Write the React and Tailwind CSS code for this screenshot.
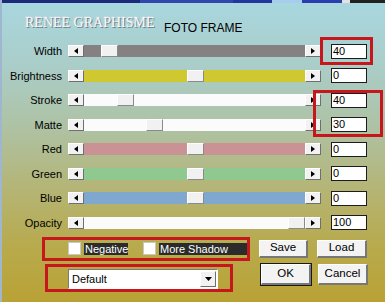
import React from "react";

const ui = { fontFamily: '"Liberation Sans", Arial, sans-serif' };

function ArrowBtn({ dir }) {
  return (
    <div className="w-[16px] h-[12px] shrink-0 bg-[#f2f2f2] border-t border-l border-t-white border-l-white border-b border-r border-b-[#6f6f6f] border-r-[#6f6f6f] flex items-center justify-center">
      <svg width="4" height="6" viewBox="0 0 4 6">
        <polygon points={dir === "left" ? "4,0 0,3 4,6" : "0,0 4,3 0,6"} fill="#000" />
      </svg>
    </div>
  );
}

const rows = [
  { label: "Width", track: "bg-[#858182]", thumb: "ml-[17px]", value: "40" },
  { label: "Brightness", track: "bg-[#cfc830]", thumb: "ml-[103px]", value: "0" },
  { label: "Stroke", track: "bg-[#fbfbfb]", thumb: "ml-[33px]", value: "40" },
  { label: "Matte", track: "bg-[#fbfbfb]", thumb: "ml-[62px]", value: "30" },
  { label: "Red", track: "bg-[#c99395]", thumb: "ml-[103px]", value: "0" },
  { label: "Green", track: "bg-[#8fc98f]", thumb: "ml-[103px]", value: "0" },
  { label: "Blue", track: "bg-[#80a8cf]", thumb: "ml-[103px]", value: "0" },
  { label: "Opacity", track: "bg-[#fbfbfb]", thumb: "ml-[204px]", value: "100" },
];

function Btn({ children, w, h, def }) {
  return (
    <div
      className={
        (def ? "outline outline-1 outline-[#1a1a1a] " : "") +
        "shrink-0 bg-[#f3f3f3] border-t border-l border-t-white border-l-white border-b-2 border-r-2 border-b-[#777] border-r-[#777] flex items-center justify-center text-[11.5px] text-black " +
        w +
        " " +
        h
      }
    >
      {children}
    </div>
  );
}

function Check() {
  return (
    <div className="w-[13px] h-[13px] shrink-0 bg-white border border-[#c8c8c8]" />
  );
}

export default function App() {
  return (
    <div
      className="relative w-[385px] h-[302px] overflow-hidden flex flex-col bg-[linear-gradient(180deg,#a8d7e0_0%,#aacdc8_22%,#aec2a4_42%,#b4b577_62%,#b8aa4c_82%,#b9a235_100%)] border-l-2 border-l-[#9fb6cf]"
      style={ui}
    >
      {/* top strip */}
      <div className="flex h-[3px] shrink-0">
        <div className="w-[138px] bg-[#1d2a7a]" />
        <div className="w-[93px] bg-[#3246b0]" />
        <div className="w-[39px] bg-[#2236a0]" />
        <div className="w-[30px] bg-[#a6cdee]" />
        <div className="w-[40px] bg-[#2a3fae]" />
        <div className="w-[8px] bg-[#e2e2e2]" />
        <div className="flex-1 bg-[#222]" />
      </div>

      {/* title */}
      <div className="flex h-[36px] shrink-0 pl-[23px] items-start">
        <span
          className="w-[139px] mt-[13px] text-[14px] leading-[14px] text-[#f8f8f8] [text-shadow:1px_1px_0_#6f7f85,-1px_-1px_0_#c4d8dc]"
          style={{ fontFamily: '"Liberation Serif", "Times New Roman", serif' }}
        >
          RENEE GRAPHISME
        </span>
        <span className="mt-[19px] text-[12px] leading-[12px] text-black">FOTO FRAME</span>
      </div>

      {/* slider rows */}
      <div className="flex flex-col shrink-0">
        {rows.map((r) => (
          <div key={r.label} className="flex items-center h-[24.5px]">
            <div className="w-[60px] text-right text-[11px] text-black leading-[12px]">{r.label}</div>
            <div className="ml-[6px]">
              <ArrowBtn dir="left" />
            </div>
            <div className={"flex w-[221px] h-[12px] " + r.track}>
              <div
                className={
                  r.thumb +
                  " w-[17px] h-[12px] bg-[#f1f1f1] border-t border-l border-t-white border-l-white border-b border-r border-b-[#8a8a8a] border-r-[#8a8a8a]"
                }
              />
            </div>
            <ArrowBtn dir="right" />
            <div className="ml-[10px] w-[36px] h-[15px] bg-white border border-[#1c1c1c] text-[11px] leading-[13px] pl-[1px] text-black">
              {r.value}
            </div>
          </div>
        ))}
      </div>

      {/* checkboxes + save/load */}
      <div className="flex items-center h-[27px] shrink-0 pl-[66px]">
        <Check />
        <div className="ml-[3px] w-[44px] h-[12px] bg-[#2b2b2b] text-white text-[11px] leading-[12px] pl-[1px]">Negative</div>
        <div className="ml-[15px]">
          <Check />
        </div>
        <div className="ml-[3px] w-[89px] h-[12px] bg-[#2b2b2b] text-white text-[11px] leading-[12px] pl-[1px]">More Shadow</div>
        <div className="ml-[11px]">
          <Btn w="w-[49px]" h="h-[18px]">Save</Btn>
        </div>
        <div className="ml-[9px]">
          <Btn w="w-[50px]" h="h-[18px]">Load</Btn>
        </div>
      </div>

      {/* dropdown + ok/cancel */}
      <div className="flex items-start h-[32px] shrink-0 pl-[66px]">
        <div className="mt-[7px] w-[150px] h-[20px] bg-white border-t border-l border-t-[#7a7a7a] border-l-[#7a7a7a] border-b border-r border-b-white border-r-white flex items-center">
          <span className="flex-1 pl-[3px] text-[11px] text-black leading-[12px]">Default</span>
          <div className="w-[16px] h-[16px] mr-[1px] bg-[#f2f2f2] border-t border-l border-t-white border-l-white border-b border-r border-b-[#6f6f6f] border-r-[#6f6f6f] flex items-center justify-center">
            <svg width="7" height="4" viewBox="0 0 7 4">
              <polygon points="0,0 7,0 3.5,4" fill="#000" />
            </svg>
          </div>
        </div>
        <div className="ml-[43px] mt-[2px]">
          <Btn w="w-[50px]" h="h-[21px]" def>OK</Btn>
        </div>
        <div className="ml-[7px] mt-[2px]">
          <Btn w="w-[50px]" h="h-[21px]">Cancel</Btn>
        </div>
      </div>

      {/* red annotation frames */}
      <div className="absolute left-[318px] top-[37px] w-[53px] h-[28px] border-[3px] border-[#c5171c]" />
      <div className="absolute left-[311px] top-[90px] w-[70px] h-[47px] border-[3px] border-[#c5171c]" />
      <div className="absolute left-[40px] top-[237px] w-[208px] h-[24px] border-[3px] border-[#c5171c]" />
      <div className="absolute left-[43px] top-[264px] w-[188px] h-[28px] border-[3px] border-[#c5171c]" />
    </div>
  );
}
